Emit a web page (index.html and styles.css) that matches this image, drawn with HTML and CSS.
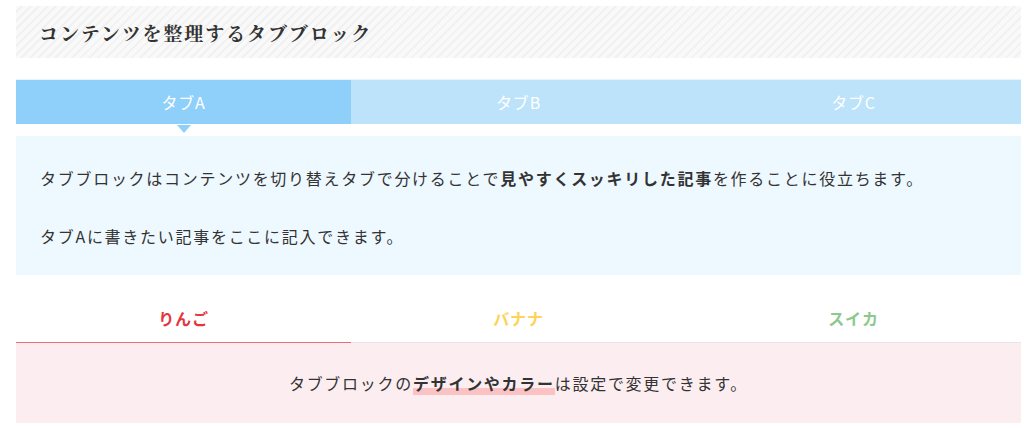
FILE: index.html
```html
<!DOCTYPE html>
<html lang="ja">
<head>
<meta charset="utf-8">
<link rel="stylesheet" href="styles.css">
</head>
<body>
<div class="page">
  <h2 class="heading">コンテンツを整理するタブブロック</h2>

  <div class="tabs1">
    <div class="tabs1-nav">
      <div class="tab1 active">タブA</div>
      <div class="tab1">タブB</div>
      <div class="tab1">タブC</div>
    </div>
    <div class="tabs1-body">
      <p>タブブロックはコンテンツを切り替えタブで分けることで<strong>見やすくスッキリした記事</strong>を作ることに役立ちます。</p>
      <p>タブAに書きたい記事をここに記入できます。</p>
    </div>
  </div>

  <div class="tabs2">
    <div class="tabs2-nav">
      <div class="tab2 red active">りんご</div>
      <div class="tab2 yellow">バナナ</div>
      <div class="tab2 green">スイカ</div>
    </div>
    <div class="tabs2-body">
      <p>タブブロックの<strong class="marker">デザインやカラー</strong>は設定で変更できます。</p>
    </div>
  </div>
</div>
</body>
</html>
```

FILE: styles.css
```css
* { box-sizing: border-box; }
html, body { margin: 0; padding: 0; background: #fff; }
body {
  font-family: "Noto Sans CJK JP", "Noto Sans", sans-serif;
  color: #333;
}
.page {
  width: 1005px;
  margin-left: 16px;
  padding-top: 6px;
}
.heading {
  margin: 0;
  height: 52px;
  display: flex;
  align-items: center;
  padding-left: 23px;
  font-family: "Noto Serif CJK JP", "Noto Sans CJK JP", serif;
  font-size: 19px;
  font-weight: 700;
  letter-spacing: 0.1em;
  color: #333;
  background: repeating-linear-gradient(-45deg, #f9f9f9 0 4px, #f1f1f1 4px 6px);
}
.tabs1 {
  margin-top: 21px;
  border-top: 1px solid #e8f3fc;
}
.tabs1-nav {
  display: flex;
}
.tab1 {
  flex: 1;
  height: 44px;
  display: flex;
  align-items: center;
  justify-content: center;
  background: #bde3fb;
  color: #fff;
  font-size: 16px;
  letter-spacing: 0.05em;
  position: relative;
}
.tab1.active { background: #8fd0fb; }
.tab1.active::after {
  content: "";
  position: absolute;
  left: 50%;
  top: 100%;
  margin-left: -7px;
  margin-top: 1px;
  border-left: 7px solid transparent;
  border-right: 7px solid transparent;
  border-top: 8px solid #8fd0fb;
}
.tabs1-body {
  margin-top: 12px;
  background: #eef8ff;
  padding: 28px 24px 24px;
  font-size: 16px;
  letter-spacing: 1.72px;
  line-height: 1.8;
}
.tabs1-body p { margin: 0 0 29px; }
.tabs1-body p:last-child { margin-bottom: 0; }
.tabs1-body strong { font-weight: 700; }

.tabs2 { margin-top: 20px; }
.tabs2-nav {
  display: flex;
  border-bottom: 1px solid #e6e6e6;
}
.tab2 {
  flex: 1;
  height: 48px;
  display: flex;
  align-items: center;
  justify-content: center;
  font-size: 16px;
  font-weight: 700;
  letter-spacing: 0.05em;
  margin-bottom: -1px;
  border-bottom: 1px solid transparent;
}
.tab2.red { color: #e5353f; }
.tab2.active { border-bottom-color: #f06a74; }
.tab2.yellow { color: #fdd35a; }
.tab2.green { color: #8dc88d; }
.tabs2-body {
  background: #fcedf0;
  height: 80px;
  display: flex;
  align-items: center;
  justify-content: center;
  font-size: 16px;
  letter-spacing: 1.72px;
}
.tabs2-body p { margin: 0; }
.marker {
  font-weight: 700;
  background: linear-gradient(transparent 70%, #fbc2c4 70%);
}
```
